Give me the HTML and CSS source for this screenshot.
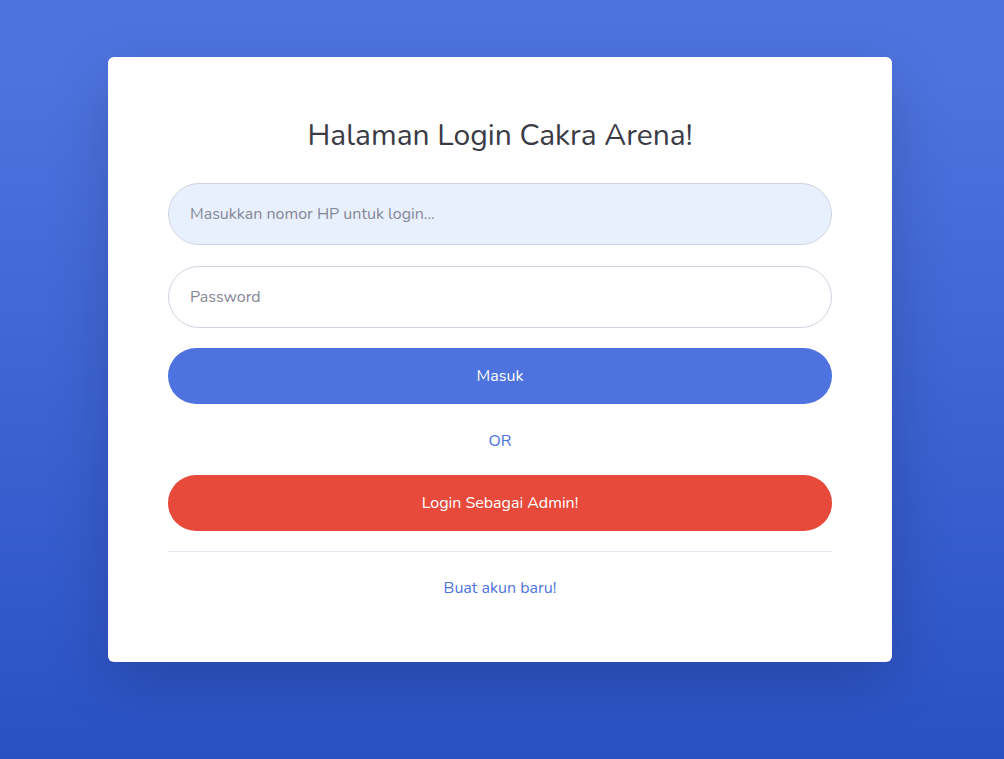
FILE: index.html
```html
<!DOCTYPE html>
<html lang="id">
<head>
<meta charset="utf-8">
<title>Login Cakra Arena</title>
<link rel="stylesheet" href="styles.css">
</head>
<body>
<div class="page">
  <div class="card">
    <h1 class="title">Halaman Login Cakra Arena!</h1>
    <form class="form">
      <input class="field field-filled" type="text" placeholder="Masukkan nomor HP untuk login...">
      <input class="field field-last" type="password" placeholder="Password">
      <button type="button" class="btn btn-primary">Masuk</button>
      <div class="or">OR</div>
      <button type="button" class="btn btn-danger">Login Sebagai Admin!</button>
    </form>
    <hr class="divider">
    <div class="links"><a class="link" href="#">Buat akun baru!</a></div>
  </div>
</div>
</body>
</html>
```
FILE: styles.css
```css
html, body {
  margin: 0;
  padding: 0;
  height: 100%;
}
body {
  font-family: "Nunito", "Lato", "Noto Sans", sans-serif;
  background-color: #4e73df;
  background-image: linear-gradient(180deg, #4e73df 10%, #2a51c4 100%);
  min-height: 759px;
}
.page {
  padding: 57px 0 0 108px;
}
.card {
  box-sizing: border-box;
  width: 784px;
  height: 605px;
  background: #fff;
  border-radius: 6px;
  box-shadow: 0 20px 60px rgba(0, 0, 0, 0.175);
  padding: 60px 60px 0;
}
.title {
  margin: 0 0 28px;
  font-size: 30px;
  line-height: 38px;
  font-weight: 400;
  color: #3a3b45;
  text-align: center;
}
.form {
  display: flex;
  flex-direction: column;
}
.field {
  box-sizing: border-box;
  height: 62px;
  width: 100%;
  margin: 0 0 21px;
  padding: 0 21px;
  border: 1px solid #d1d3e2;
  border-radius: 200px;
  font-family: inherit;
  font-size: 16px;
  color: #6e707e;
  background: #fff;
  outline: none;
}
.field-last {
  margin-bottom: 20px;
}
.field::placeholder {
  color: #858796;
  opacity: 1;
}
.field-filled {
  background: #e8f0fe;
}
.btn {
  display: block;
  width: 100%;
  height: 56px;
  border: none;
  border-radius: 200px;
  color: #fff;
  font-family: inherit;
  font-size: 16px;
  cursor: pointer;
}
.btn-primary {
  background: #4e73df;
}
.btn-danger {
  background: #e74a3b;
}
.or {
  margin: 25px 0 22px;
  line-height: 24px;
  font-size: 16px;
  color: #4e73df;
  text-align: center;
}
.divider {
  margin: 20px 0 0;
  border: 0;
  border-top: 1px solid #e3e6f0;
}
.links {
  margin-top: 24px;
  text-align: center;
  line-height: 24px;
}
.link {
  font-size: 16px;
  color: #4e73df;
  text-decoration: none;
}
```
